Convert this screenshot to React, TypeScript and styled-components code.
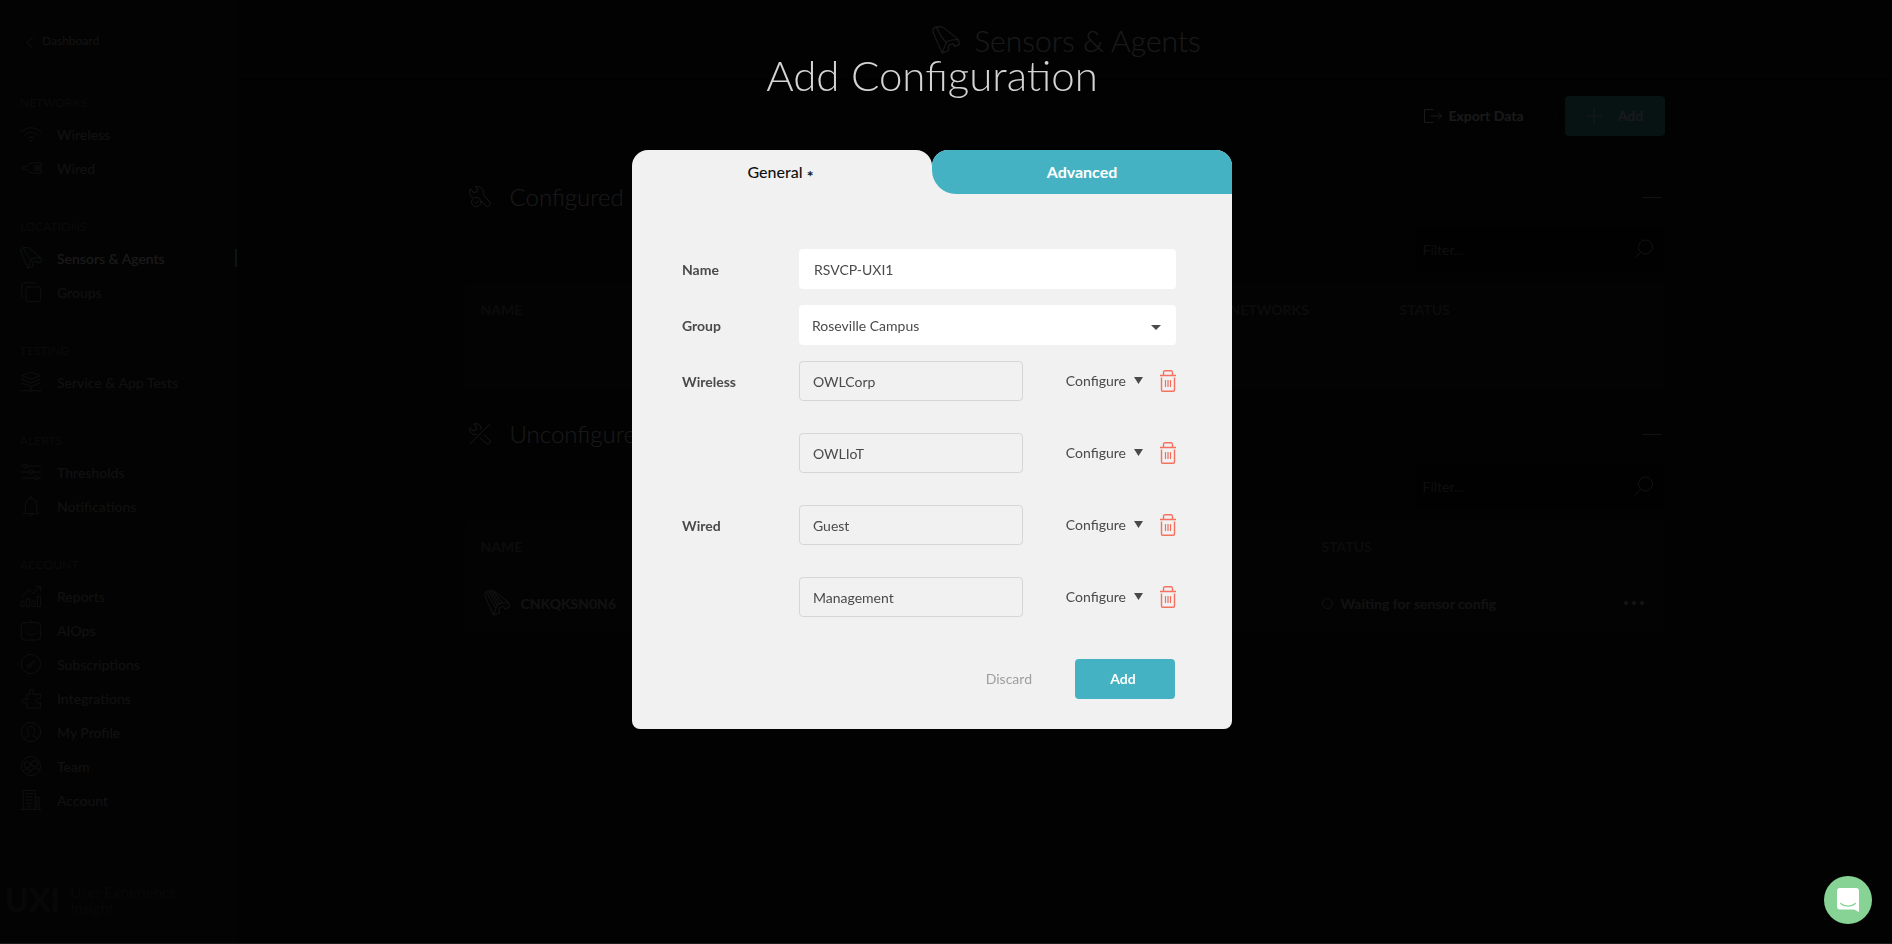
import React from "react";
import styled, { createGlobalStyle } from "styled-components";

const Global = createGlobalStyle`
  * { box-sizing: border-box; }
  html, body { margin: 0; padding: 0; background: #141414; }
  body, button, input, select { font-family: Lato, "Open Sans", sans-serif; }
  h1, h2, h3, p, ul { margin: 0; padding: 0; font-weight: 400; }
`;

const Shell = styled.div`
  display: flex;
  min-height: 100vh;
  background: #141414;
  color: #ffffff;
`;

const Sidebar = styled.nav`
  display: flex;
  flex-direction: column;
  flex: none;
  width: 237px;
  min-height: 100vh;
  background: #1e1e1e;
`;

const Back = styled.a`
  display: flex;
  align-items: flex-start;
  gap: 8px;
  height: 83px;
  padding: 32px 0 0 26px;
  font-size: 12px;
  line-height: 18px;
  color: #b4b4b4;
  text-decoration: none;
  svg { margin-top: 4px; }
`;

const NavGroup = styled.section`
  margin-bottom: 22px;
`;

const NavHeading = styled.h3`
  padding-left: 20px;
  font-size: 12px;
  line-height: 24px;
  margin: 8px 0 2px;
  color: #646464;
`;

const NavList = styled.ul`
  list-style: none;
`;

const NavLink = styled.a<{ $active?: boolean }>`
  display: flex;
  align-items: center;
  gap: 15px;
  height: 34px;
  padding-left: 20px;
  font-size: 14px;
  font-weight: 500;
  color: ${(p) => (p.$active ? "#ffffff" : "#a0a0a0")};
  text-decoration: none;
  svg { color: ${(p) => (p.$active ? "#86d395" : "#a0a0a0")}; }
  &::after {
    content: "";
    display: ${(p) => (p.$active ? "block" : "none")};
    width: 2px;
    height: 18px;
    margin-left: auto;
    background: #86d395;
  }
`;

const Brand = styled.div`
  display: flex;
  align-items: center;
  gap: 10px;
  margin-top: auto;
  padding: 0 0 28px 5px;
  color: #4a4a4a;
  font-size: 15px;
  line-height: 16px;
`;

const BrandMark = styled.strong`
  font-size: 32px;
  line-height: 32px;
  font-weight: 900;
`;

const Main = styled.main`
  flex: 1;
  min-width: 0;
`;

const PageHeader = styled.header`
  display: flex;
  justify-content: center;
  align-items: center;
  gap: 14px;
  height: 80px;
  padding-left: 4px;
  border-bottom: 1px solid #000000;
`;

const PageTitle = styled.h1`
  font-size: 30px;
  line-height: 40px;
  font-weight: 300;
`;

const Content = styled.div`
  max-width: 1200px;
  margin: 0 auto;
`;

const ActionBar = styled.div`
  display: flex;
  justify-content: flex-end;
  align-items: center;
  padding: 16px 0;
`;

const ExportButton = styled.button`
  display: flex;
  align-items: center;
  gap: 6px;
  height: 40px;
  padding: 0 0 1px;
  border: 0;
  background: none;
  color: #ffffff;
  font-size: 14px;
  font-weight: 700;
`;

const Separator = styled.span`
  width: 1px;
  height: 16px;
  margin: 0 8px 0 32px;
  background: #2e2e2e;
`;

const AddSensor = styled.button`
  display: flex;
  align-items: center;
  justify-content: center;
  gap: 16px;
  width: 100px;
  height: 40px;
  padding: 0 0 1px;
  border: 0;
  border-radius: 4px;
  background: #45b2c3;
  color: #ffffff;
  font-size: 14px;
  font-weight: 700;
`;

const Section = styled.section`
  margin-top: 29px;
`;

const SectionHead = styled.div`
  display: flex;
  align-items: center;
  gap: 19px;
  height: 32px;
  padding: 0 3px 0 4px;
`;

const SectionTitle = styled.h2`
  font-size: 24px;
  line-height: 32px;
  font-weight: 300;
`;

const Collapse = styled.button`
  width: 20px;
  height: 20px;
  margin-left: auto;
  padding: 0;
  border: 0;
  background: none;
  color: #b4b4b4;
  svg { display: block; }
`;

const FilterBox = styled.label`
  display: flex;
  align-items: center;
  justify-content: space-between;
  width: 249px;
  height: 45px;
  margin: 14px 0 11px auto;
  padding: 0 11px 2px 7px;
  border-radius: 4px;
  background: #0a0a0a;
  color: #b4b4b4;
`;

const FilterInput = styled.input`
  width: 180px;
  padding: 2px 0 0;
  border: 0;
  background: none;
  color: #ffffff;
  font-size: 14px;
  &::placeholder { color: #8c8c8c; opacity: 1; }
`;

const Table = styled.table`
  width: 100%;
  table-layout: fixed;
  border-collapse: collapse;
  background: #1e1e1e;
  border-radius: 6px;
  text-align: left;
`;

const Th = styled.th`
  height: 56px;
  padding: 0 0 4px 16px;
  font-size: 14px;
  color: #747474;
`;

const Td = styled.td`
  height: 50px;
  padding: 0 0 0 16px;
  background: #262626;
  font-size: 14px;
  font-weight: 700;
  color: #b0b0b0;
`;

const Cell = styled.div<{ $gap: number; $indent?: number }>`
  display: flex;
  align-items: center;
  gap: ${(p) => p.$gap}px;
  height: 56px;
  padding: 0 0 2px ${(p) => p.$indent ?? 0}px;
`;

const MoreButton = styled.button`
  margin: 0 21px 0 auto;
  padding: 0;
  border: 0;
  background: none;
  color: #c8c8c8;
  svg { display: block; }
`;

const Overlay = styled.div`
  position: fixed;
  inset: 0;
  display: flex;
  flex-direction: column;
  align-items: center;
  padding-right: 28px;
  background: rgba(0, 0, 0, 0.9);
  border-bottom: 1px solid #1b1b1b;
  overflow: auto;
`;

const DialogTitle = styled.h1`
  margin: 51px 0;
  font-size: 42px;
  line-height: 48px;
  font-weight: 300;
  color: #d4d4d4;
`;

const Dialog = styled.form`
  width: 600px;
  flex: none;
  border-radius: 16px 16px 8px 8px;
  background: linear-gradient(transparent 40px, #f1f1f1 40px);
`;

const Tabs = styled.div`
  display: grid;
  grid-template-columns: 1fr 1fr;
`;

const TabSlot = styled.div`
  height: 44px;
  border-radius: 16px 16px 0 0;
  background: #f1f1f1;
  overflow: hidden;
`;

const Tab = styled.button<{ $active?: boolean }>`
  width: 100%;
  height: 44px;
  padding: 0 ${(p) => (p.$active ? 3 : 0)}px 0 0;
  border: 0;
  border-radius: 0 0 0 ${(p) => (p.$active ? 0 : 24)}px;
  background: ${(p) => (p.$active ? "#f1f1f1" : "#45b2c3")};
  color: ${(p) => (p.$active ? "#111111" : "#ffffff")};
  font-size: 16px;
  line-height: 20px;
  font-weight: ${(p) => (p.$active ? 500 : 700)};
`;

const Required = styled.span`
  display: inline-block;
  font-size: 16px;
  line-height: 12px;
  font-weight: 700;
  vertical-align: -4px;
`;

const Fields = styled.div`
  display: flex;
  flex-direction: column;
  padding: 55px 56px 0 50px;
`;

const Row = styled.div<{ $tall?: boolean }>`
  display: flex;
  align-items: center;
  height: 40px;
  margin-bottom: ${(p) => (p.$tall ? 32 : 16)}px;
`;

const Label = styled.label`
  flex: none;
  width: 117px;
  font-size: 14px;
  font-weight: 700;
  color: #4a4a4a;
`;

const TextInput = styled.input`
  flex: 1;
  height: 40px;
  padding: 0 15px;
  border: 0;
  border-radius: 4px;
  background: #ffffff;
  font-size: 14px;
  color: #4a4a4a;
`;

const SelectWrap = styled.div`
  display: flex;
  align-items: center;
  flex: 1;
  height: 40px;
  padding-right: 15px;
  border-radius: 4px;
  background: #ffffff;
  color: #4a4a4a;
  svg { margin-top: 4px; }
`;

const Select = styled.select`
  flex: 1;
  height: 40px;
  padding: 0 0 0 13px;
  border: 0;
  appearance: none;
  background: none;
  font-size: 14px;
  color: #4a4a4a;
`;

const NetworkInput = styled.input`
  flex: none;
  width: 224px;
  height: 40px;
  padding: 0 13px;
  border: 1px solid #d6d6d6;
  border-radius: 4px;
  background: #f1f1f1;
  font-size: 14px;
  color: #4a4a4a;
`;

const Configure = styled.button`
  display: flex;
  align-items: center;
  gap: 8px;
  margin-left: auto;
  padding: 0 0 2px;
  border: 0;
  background: none;
  font-size: 14px;
  color: #4a4a4a;
`;

const Delete = styled.button`
  margin-left: 17px;
  padding: 0;
  border: 0;
  background: none;
  color: #f4705f;
  svg { display: block; }
`;

const Actions = styled.div`
  display: flex;
  justify-content: flex-end;
  align-items: center;
  gap: 43px;
  padding: 10px 57px 30px 0;
`;

const Discard = styled.button`
  padding: 0 0 2px;
  border: 0;
  background: none;
  font-size: 14px;
  color: #9e9e9e;
`;

const Submit = styled.button`
  width: 100px;
  height: 40px;
  padding: 0 4px 2px 0;
  border: 0;
  border-radius: 4px;
  background: #45b2c3;
  color: #ffffff;
  font-size: 14px;
  font-weight: 700;
`;

const Chat = styled.button`
  position: fixed;
  right: 20px;
  bottom: 20px;
  width: 48px;
  height: 48px;
  padding: 0;
  border: 0;
  border-radius: 50%;
  background: #86d395;
  svg { display: block; margin: 0 auto; }
`;

const Line = ({ size = 22, box = 24, width = 1, children }: { size?: number; box?: number; width?: number; children: React.ReactNode }) => (
  <svg width={size} height={size} viewBox={`0 0 ${box} ${box}`} fill="none" stroke="currentColor" strokeWidth={width} strokeLinejoin="round" strokeLinecap="round" aria-hidden="true">
    {children}
  </svg>
);

const sensorOutline = "M.8 4.500C.6 2.500 2 .8 4 .7L8 .7c1 0 1.800.6 2.600 1.300L22 11c1 1 1.400 3 1.300 5L19.500 17.500l-1.300-2.200-3.500.9-.9 1.500.6 3.300L9 23.200C7.500 21 2 8 .8 4.500ZM9 22.500 11 17C12 13.800 14 12.300 17 12L22.500 11.500";

const icons: Record<string, React.ReactNode> = {
  wifi: <><path d="M1 10c6-6.500 16-6.500 22 0M5 13.500c4-4.500 10-4.500 14 0M9 16.500c1.500-1.800 4.500-1.800 6 0" /><circle cx="12" cy="19.500" r=".6" /></>,
  plug: <path d="M7 10.500c2-3 4-4 7-4h9v11h-9c-3 0-5-1-7-4H3.500a1.500 1.500 0 0 1 0-3ZM16 9.500h5v5h-5ZM18 11.500h2v1h-2Z" />,
  sensor: <path d={`${sensorOutline}M4 1.500C5.500 5 9 11 12.500 14.500`} />,
  sensorLines: <path d={`${sensorOutline}M2.500 2.500 11 17M4.500 1.500 12.500 14.500M6.500 1 14.500 13M8.500 1 17 12`} />,
  groups: <><rect x="6.500" y="6.500" width="16" height="16" rx="2.500" /><path d="M3.500 17.500c-1 0-1.500-1-1.500-2V4.500C2 3 3 2 4.500 2h11c1 0 2 .5 2 1.500" /></>,
  layers: <path d="m12 1.500 10 3.500-10 4L2 5ZM2 9l10 4 10-4M2 13l10 4 10-4M12 17v3M1 21.500h9.500M13.500 21.500H23M10.500 21.500a1.500 1.500 0 1 0 3 0 1.500 1.500 0 1 0-3 0" />,
  sliders: <><path d="M1.500 5.500H4M8 5.500h14.500M1.500 12H10M14 12h8.500M1.500 18.500H16M20 18.500h2.500" /><circle cx="6" cy="5.500" r="2" /><circle cx="12" cy="12" r="2" /><circle cx="18" cy="18.500" r="2" /></>,
  bell: <path d="M4 20c2-2 2-4 2-8 0-5 2.500-8 6-9 3.500 1 6 4 6 9 0 4 0 6 2 8ZM12 1v2M9.500 20.500c.5 3 4.500 3 5 0" />,
  reports: <path d="m2 13 8-8 4.500 4.500L22 2M17.500 1.500h5v5M1.500 17.500h3v6h-3ZM7.500 15h3v8.500h-3ZM13.500 17.500h3v6h-3ZM19.500 12.500h3v11h-3Z" />,
  robot: <><rect x="1.500" y="4" width="21" height="19" rx="4" /><path d="M12 4V1M8 10.500h.5M15.500 10.500h.5M7.500 15.500c2 3 7 3 9 0" /></>,
  key: <><circle cx="12" cy="12" r="10.500" /><circle cx="10" cy="14" r="2" /><path d="m11.500 12.500 5-4.500M14.500 10l1 1" /></>,
  puzzle: <path d="M7.500 8H11c-1-2-1-5.500 1.500-5.500S15 6 14 8h8.500v5c-2.500-1-5-1-5 2s2.500 3 5 2v6h-15v-6c-2.500 1-5.500 1-5.500-1.500S5 12.500 7.500 13.500Z" />,
  profile: <><circle cx="12" cy="12" r="10.500" /><path d="M4.500 19.500c1-2 3.500-2 5-3v-2c-2.500-3-1.500-8.500 2.500-8.500s5 5.500 2.500 8.500v2c1.500 1 4 1 5 3" /></>,
  team: <><circle cx="12" cy="12" r="10.500" /><circle cx="8" cy="10.500" r="3.500" /><circle cx="16" cy="9.500" r="3.500" /><path d="M3 17.500c2-3 7-3 9 .5 1.500-4.500 7-5 9.500-1.500M7 21.500c1-3 4-4 5-3.500" /></>,
  building: <path d="M1 22.500h22M3.500 22.500V1.500h13v21M16.500 9h4.500v13.500M6.500 5h7M6.500 8.500h7M6.500 12h7M6.500 15.500h7M8.500 22.500v-4h3v4M18.500 12v8" />,
  wrench: <><path d="M4 12.500C.5 10.500-.3 6 1.800 3L4.500 7 8.500 6.500 9.500 3 7 1c5-1.500 10 2.500 8.500 8l7 8.500c2 2.500-.5 6-3.500 4.500L13.500 17" /><circle cx="8" cy="17.500" r="5.200" /><path d="m5.800 17.500 1.700 1.700 3-3.200" /></>,
  tools: <path d="M1.500 22.500 22.500 1.500M8.500 12.500C4 13.500-.5 10 1 5l3.500 3.500L8 7.500V3.500L5 1.200C9.500-.5 14 2.500 13.200 7.500M16 12.500l6.800 6.500c1.500 1.500-1 4.800-3.300 3.800L12.500 16.500" />,
};

const nav: { title: string; items: [string, string][] }[] = [
  { title: "NETWORKS", items: [["wifi", "Wireless"], ["plug", "Wired"]] },
  { title: "LOCATIONS", items: [["sensor", "Sensors & Agents"], ["groups", "Groups"]] },
  { title: "TESTING", items: [["layers", "Service & App Tests"]] },
  { title: "ALERTS", items: [["sliders", "Thresholds"], ["bell", "Notifications"]] },
  {
    title: "ACCOUNT",
    items: [["reports", "Reports"], ["robot", "AIOps"], ["key", "Subscriptions"], ["puzzle", "Integrations"], ["profile", "My Profile"], ["team", "Team"], ["building", "Account"]],
  },
];

const networks = [
  { label: "Wireless", value: "OWLCorp" },
  { label: "", value: "OWLIoT" },
  { label: "Wired", value: "Guest" },
  { label: "", value: "Management" },
];

const Caret = ({ height = 6, width = 9 }: { height?: number; width?: number }) => (
  <svg width={width} height={height} viewBox="0 0 10 6" preserveAspectRatio="none" fill="currentColor" aria-hidden="true">
    <path d="M0 0h10L5 6Z" />
  </svg>
);

const Trash = () => (
  <svg width="16" height="22" viewBox="0 0 16 22" fill="none" stroke="currentColor" strokeWidth="1.400" aria-hidden="true">
    <path d="M0 5.500h16M3.500 5V2.500C3.500 1.300 4 .7 5 .7h6c1 0 1.500.6 1.500 1.800V5M1.500 7.500V20c0 1 .5 1.300 1.400 1.300h10.200c.9 0 1.400-.3 1.400-1.300V7.500" />
    <path d="M5.500 10v7M8 10v7M10.500 10v7" strokeWidth="1.200" />
  </svg>
);

const SectionHeader = ({ icon, title }: { icon: string; title: string }) => (
  <>
    <SectionHead>
      <Line size={22}>{icons[icon]}</Line>
      <SectionTitle>{title}</SectionTitle>
      <Collapse type="button" aria-label={`Collapse ${title}`}>
        <Line size={20} box={20}><path d="M1 10.500h18" /></Line>
      </Collapse>
    </SectionHead>
    <FilterBox>
      <FilterInput placeholder="Filter..." aria-label={`Filter ${title}`} />
      <Line size={20} box={20}><path d="m1 19 5.500-5.500" /><circle cx="11.500" cy="8" r="7" /></Line>
    </FilterBox>
  </>
);

export default function App() {
  return (
    <>
      <Global />
      <Shell>
        <Sidebar>
          <Back href="#dashboard">
            <svg width="8" height="13" viewBox="0 0 8 13" fill="none" stroke="currentColor" aria-hidden="true"><path d="M7 .5 1 6.500l6 6" /></svg>
            Dashboard
          </Back>
          {nav.map((group) => (
            <NavGroup key={group.title}>
              <NavHeading>{group.title}</NavHeading>
              <NavList>
                {group.items.map(([icon, label]) => (
                  <li key={label}>
                    <NavLink href={`#${icon}`} $active={icon === "sensor"}>
                      <Line>{icons[icon]}</Line>
                      {label}
                    </NavLink>
                  </li>
                ))}
              </NavList>
            </NavGroup>
          ))}
          <Brand>
            <BrandMark>UXI</BrandMark>
            <span>User Experience<br />Insight</span>
          </Brand>
        </Sidebar>
        <Main>
          <PageHeader>
            <Line size={28}>{icons.sensor}</Line>
            <PageTitle>Sensors &amp; Agents</PageTitle>
          </PageHeader>
          <Content>
            <ActionBar>
              <ExportButton type="button">
                <svg width="19" height="16" viewBox="0 0 19 16" fill="none" stroke="currentColor" aria-hidden="true"><path d="M9.500 1.500h-9v13h9M6.500 8h11M14 4.500 17.500 8 14 11.500" /></svg>
                Export Data
              </ExportButton>
              <Separator />
              <AddSensor type="button">
                <Line size={16} box={16}><path d="M8 .5v15M.5 8h15" /></Line>
                Add
              </AddSensor>
            </ActionBar>
            <Section>
              <SectionHeader icon="wrench" title="Configured" />
              <Table>
                <colgroup><col width="749" /><col width="170" /><col width="281" /></colgroup>
                <thead><tr><Th>NAME</Th><Th>NETWORKS</Th><Th>STATUS</Th></tr></thead>
                <tbody><tr><Td /><Td /><Td /></tr></tbody>
              </Table>
            </Section>
            <Section>
              <SectionHeader icon="tools" title="Unconfigured" />
              <Table>
                <colgroup><col width="841" /><col width="359" /></colgroup>
                <thead><tr><Th>NAME</Th><Th>STATUS</Th></tr></thead>
                <tbody>
                  <tr>
                    <Td><Cell $gap={11} $indent={3}><Line size={26}>{icons.sensorLines}</Line>CNKQKSN0N6</Cell></Td>
                    <Td>
                      <Cell $gap={8}>
                        <Line size={11} box={11}><circle cx="5.500" cy="5.500" r="5" /></Line>
                        Waiting for sensor config
                        <MoreButton type="button" aria-label="More actions">
                          <svg width="20" height="4" viewBox="0 0 20 4" fill="currentColor" aria-hidden="true">
                            <circle cx="2" cy="2" r="2" /><circle cx="10" cy="2" r="2" /><circle cx="18" cy="2" r="2" />
                          </svg>
                        </MoreButton>
                      </Cell>
                    </Td>
                  </tr>
                </tbody>
              </Table>
            </Section>
          </Content>
        </Main>
      </Shell>
      <Overlay>
        <DialogTitle id="dialog-title">Add Configuration</DialogTitle>
        <Dialog role="dialog" aria-labelledby="dialog-title" onSubmit={(e) => e.preventDefault()}>
          <Tabs>
            <TabSlot><Tab type="button" $active>General <Required>*</Required></Tab></TabSlot>
            <TabSlot><Tab type="button">Advanced</Tab></TabSlot>
          </Tabs>
          <Fields>
            <Row>
              <Label htmlFor="name">Name</Label>
              <TextInput id="name" defaultValue="RSVCP-UXI1" />
            </Row>
            <Row>
              <Label htmlFor="group">Group</Label>
              <SelectWrap>
                <Select id="group"><option>Roseville Campus</option></Select>
                <Caret height={5} width={10} />
              </SelectWrap>
            </Row>
            {networks.map((n) => (
              <Row key={n.value} $tall>
                <Label htmlFor={n.value}>{n.label}</Label>
                <NetworkInput id={n.value} defaultValue={n.value} readOnly aria-label={n.value} />
                <Configure type="button">Configure <Caret height={7} /></Configure>
                <Delete type="button" aria-label={`Remove ${n.value}`}><Trash /></Delete>
              </Row>
            ))}
          </Fields>
          <Actions>
            <Discard type="button">Discard</Discard>
            <Submit type="submit">Add</Submit>
          </Actions>
        </Dialog>
      </Overlay>
      <Chat type="button" aria-label="Open chat">
        <svg width="22" height="24" viewBox="0 0 22 24" fill="none" aria-hidden="true">
          <path d="M3 0h16a3 3 0 0 1 3 3v21l-5-2.500H3a3 3 0 0 1-3-3V3a3 3 0 0 1 3-3Z" fill="#fff" />
          <path d="M3.500 15.500c4 3.500 11 3.500 15 0" stroke="#86d395" strokeWidth="1.200" strokeLinecap="round" />
        </svg>
      </Chat>
    </>
  );
}
